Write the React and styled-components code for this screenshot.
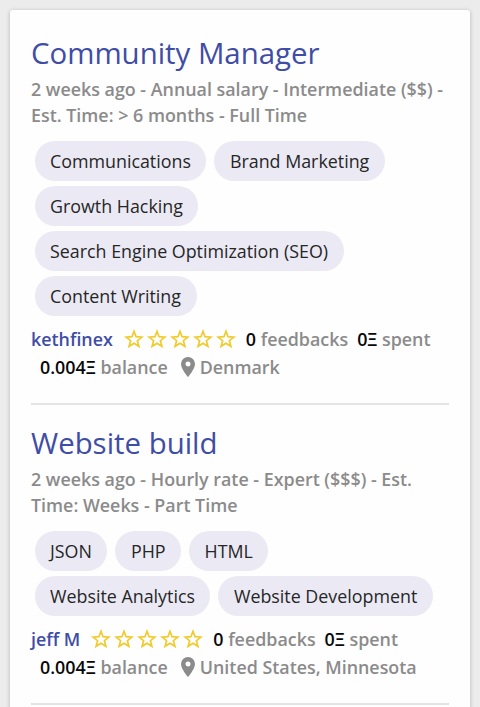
import styled, { createGlobalStyle } from 'styled-components';

const GlobalStyle = createGlobalStyle`
  body {
    margin: 0;
    background: #ececec;
    font-family: 'Open Sans', sans-serif;
    overflow: hidden;
  }
`;

const Page = styled.main`
  box-sizing: border-box;
  height: 707px;
  padding: 10px 10px 0;
  overflow: hidden;
`;

const Card = styled.div`
  box-sizing: border-box;
  height: 740px;
  padding: 5px 21px 0;
  background: #fefefe;
  border-radius: 3px;
  box-shadow: 0 1px 4px rgba(0, 0, 0, 0.25);
`;

const JobItem = styled.article`
  padding: 15px 0 22px;
  border-bottom: 2px solid #e4e4e4;
`;

const Title = styled.h2`
  margin: 0;
  color: #3f4da6;
  font-size: 29.4px;
  font-weight: 400;
  line-height: 46px;
  white-space: nowrap;
`;

const Meta = styled.p`
  margin: 0 0 13px;
  color: #8b8b8b;
  font-size: 17.88px;
  font-weight: 600;
  line-height: 26px;
  white-space: nowrap;
`;

const Tags = styled.div`
  display: flex;
  flex-wrap: wrap;
  gap: 5px 8px;
  padding-left: 3.5px;
  margin-bottom: 9px;
`;

const Tag = styled.span`
  height: 40px;
  padding: 0 15.5px;
  border-radius: 20px;
  background: #ebeaf4;
  color: #262626;
  font-size: 17.85px;
  line-height: 40px;
  white-space: nowrap;
`;

const Row = styled.div`
  display: flex;
  align-items: center;
  height: 28px;
  padding-left: ${props => (props.$indent ? 9 : 0)}px;
  color: #8b8b8b;
  font-size: 17.88px;
  font-weight: 600;
  white-space: nowrap;
`;

const Client = styled.span`
  color: #3f4da6;
`;

const Stars = styled.span`
  display: flex;
  gap: 3px;
  margin: 0 10px 0 11px;
`;

const Stat = styled.span`
  margin-right: ${props => props.$gap || 0}px;
`;

const Value = styled.span`
  color: #080808;
`;

const Pin = styled.svg`
  margin-right: 5px;
`;

const Star = () => (
  <svg width="20" height="20" viewBox="0 0 20 20" fill="none" stroke="#f0cb2c" strokeWidth="1.7">
    <path d="M10 2.4l2.1 5.3 5.7.4-4.4 3.6 1.5 5.6-4.9-3.1-4.9 3.1 1.5-5.6-4.4-3.6 5.7-.4z" />
  </svg>
);

const Job = ({ job }) => (
  <JobItem>
    <Title>{job.title}</Title>
    <Meta>{job.meta[0]}<br />{job.meta[1]}</Meta>
    <Tags>{job.tags.map(tag => <Tag key={tag}>{tag}</Tag>)}</Tags>
    <Row>
      <Client>{job.client}</Client>
      <Stars>{[1, 2, 3, 4, 5].map(n => <Star key={n} />)}</Stars>
      <Stat $gap={9}><Value>0</Value> feedbacks</Stat>
      <Stat><Value>0Ξ</Value> spent</Stat>
    </Row>
    <Row $indent>
      <Stat $gap={13}><Value>0.004Ξ</Value> balance</Stat>
      <Pin width="14" height="20" viewBox="0 0 14 20" fill="#8b8b8b">
        <path fillRule="evenodd" d="M7 0a7 7 0 0 0-7 7c0 5 7 13 7 13s7-8 7-13a7 7 0 0 0-7-7zm0 4.5a2.5 2.5 0 1 1 0 5 2.5 2.5 0 0 1 0-5z" />
      </Pin>
      <span>{job.location}</span>
    </Row>
  </JobItem>
);

const jobs = [
  {
    title: 'Community Manager',
    meta: ['2 weeks ago - Annual salary - Intermediate ($$) -', 'Est. Time: > 6 months - Full Time'],
    tags: ['Communications', 'Brand Marketing', 'Growth Hacking', 'Search Engine Optimization (SEO)', 'Content Writing'],
    client: 'kethfinex',
    location: 'Denmark',
  },
  {
    title: 'Website build',
    meta: ['2 weeks ago - Hourly rate - Expert ($$$) - Est.', 'Time: Weeks - Part Time'],
    tags: ['JSON', 'PHP', 'HTML', 'Website Analytics', 'Website Development'],
    client: 'jeff M',
    location: 'United States, Minnesota',
  },
];

const App = () => (
  <Page>
    <GlobalStyle />
    <Card>{jobs.map(job => <Job key={job.title} job={job} />)}</Card>
  </Page>
);

export default App;
